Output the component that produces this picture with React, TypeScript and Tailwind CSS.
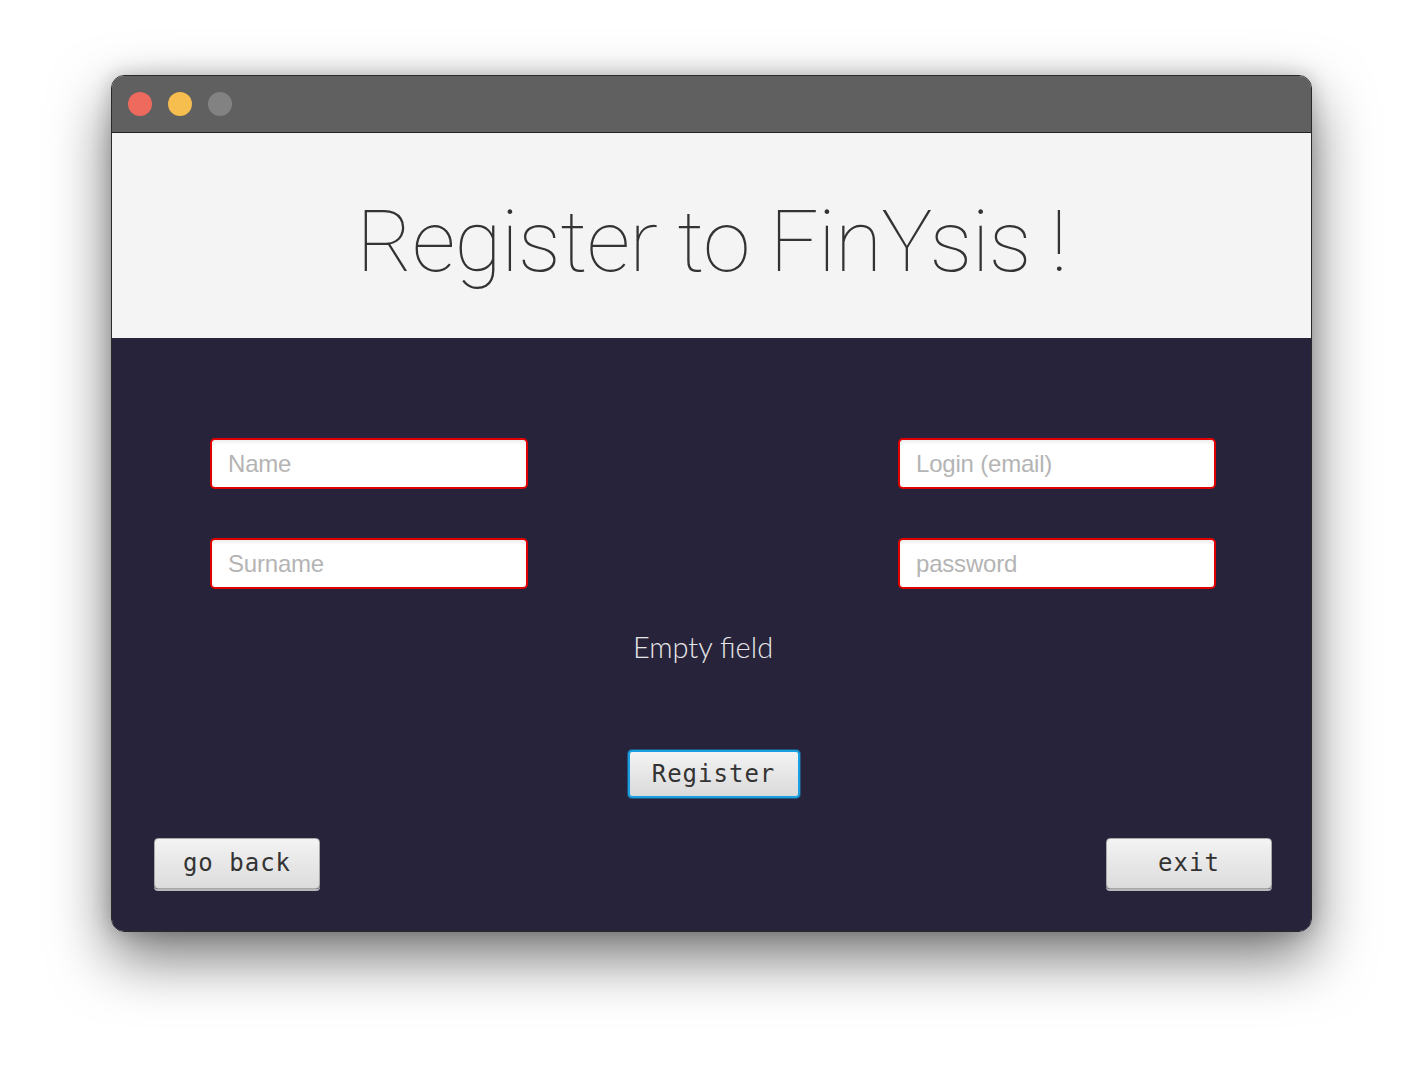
import React from "react";

function Field({ placeholder }: { placeholder: string }) {
  return (
    <div className="w-[318px] h-[51px] rounded-[5px] border-2 border-[#e00000] bg-white flex items-center pl-[16px] shadow-[inset_0_3px_3px_rgba(0,0,0,0.06)]">
      <span className="text-[24px] text-[#b4b4b4] tracking-[-0.2px]" style={{ fontFamily: '"Liberation Sans", Arial, sans-serif' }}>
        {placeholder}
      </span>
    </div>
  );
}

function Btn({ label, focused, w, h }: { label: string; focused?: boolean; w: string; h: string }) {
  return (
    <div
      className={
        focused
          ? `${w} ${h} rounded-[4px] border-[2px] border-[#1a9fe0] bg-gradient-to-b from-[#f3f3f3] to-[#dadada] flex items-center justify-center shadow-[0_0_0_1px_rgba(26,159,224,0.4)]`
          : `${w} ${h} rounded-[4px] border border-[#a8a8a8] bg-gradient-to-b from-[#f3f3f3] to-[#dcdcdc] flex items-center justify-center shadow-[0_2px_0_#b8b8b8]`
      }
    >
      <span
        className="text-[24px] text-[#333] tracking-[1px]"
        style={{ fontFamily: '"DejaVu Sans Mono", "Liberation Mono", monospace' }}
      >
        {label}
      </span>
    </div>
  );
}

export default function App() {
  return (
    <div className="w-[1424px] h-[1080px] bg-white pt-[75px] pl-[111px]">
      <div className="w-[1201px] h-[857px] rounded-[13px] overflow-hidden border border-[#2a2a2a] flex flex-col shadow-[0_25px_60px_rgba(0,0,0,0.55),0_0_20px_rgba(0,0,0,0.2)]">
        {/* title bar */}
        <div className="h-[57px] bg-[#5f605f] flex items-center pl-[16px] gap-[16px] border-b border-[#222]">
          <div className="w-[24px] h-[24px] rounded-full bg-[#ee6a5e]" />
          <div className="w-[24px] h-[24px] rounded-full bg-[#f5be4f]" />
          <div className="w-[24px] h-[24px] rounded-full bg-[#818281]" />
        </div>
        {/* header */}
        <div className="h-[205px] bg-[#f4f4f4] flex items-center justify-center">
          <h1
            className="text-[86px] font-thin text-[#333] tracking-[-0.7px] mt-[12px]"
            style={{ fontFamily: 'Roboto, "Liberation Sans", sans-serif' }}
          >
            Register to FinYsis !
          </h1>
        </div>
        {/* body */}
        <div className="flex-1 bg-[#27233b] flex flex-col pl-[42px] pr-[39px]">
          <div className="flex justify-between pl-[56px] pr-[56px] pt-[100px]">
            <div className="flex flex-col gap-[49px]">
              <Field placeholder="Name" />
              <Field placeholder="Surname" />
            </div>
            <div className="flex flex-col gap-[49px]">
              <Field placeholder="Login (email)" />
              <Field placeholder="password" />
            </div>
          </div>
          <div className="flex justify-center mt-[36px] pr-[20px]">
            <span
              className="text-[29px] font-light text-[#e6e6e6]"
              style={{ fontFamily: 'Lato, "Open Sans", sans-serif' }}
            >
              Empty field
            </span>
          </div>
          <div className="flex justify-center mt-[81px] pl-[1px]">
            <Btn label="Register" focused w="w-[172px]" h="h-[48px]" />
          </div>
          <div className="flex justify-between mt-[40px]">
            <Btn label="go back" w="w-[166px]" h="h-[51px]" />
            <Btn label="exit" w="w-[166px]" h="h-[51px]" />
          </div>
        </div>
      </div>
    </div>
  );
}
